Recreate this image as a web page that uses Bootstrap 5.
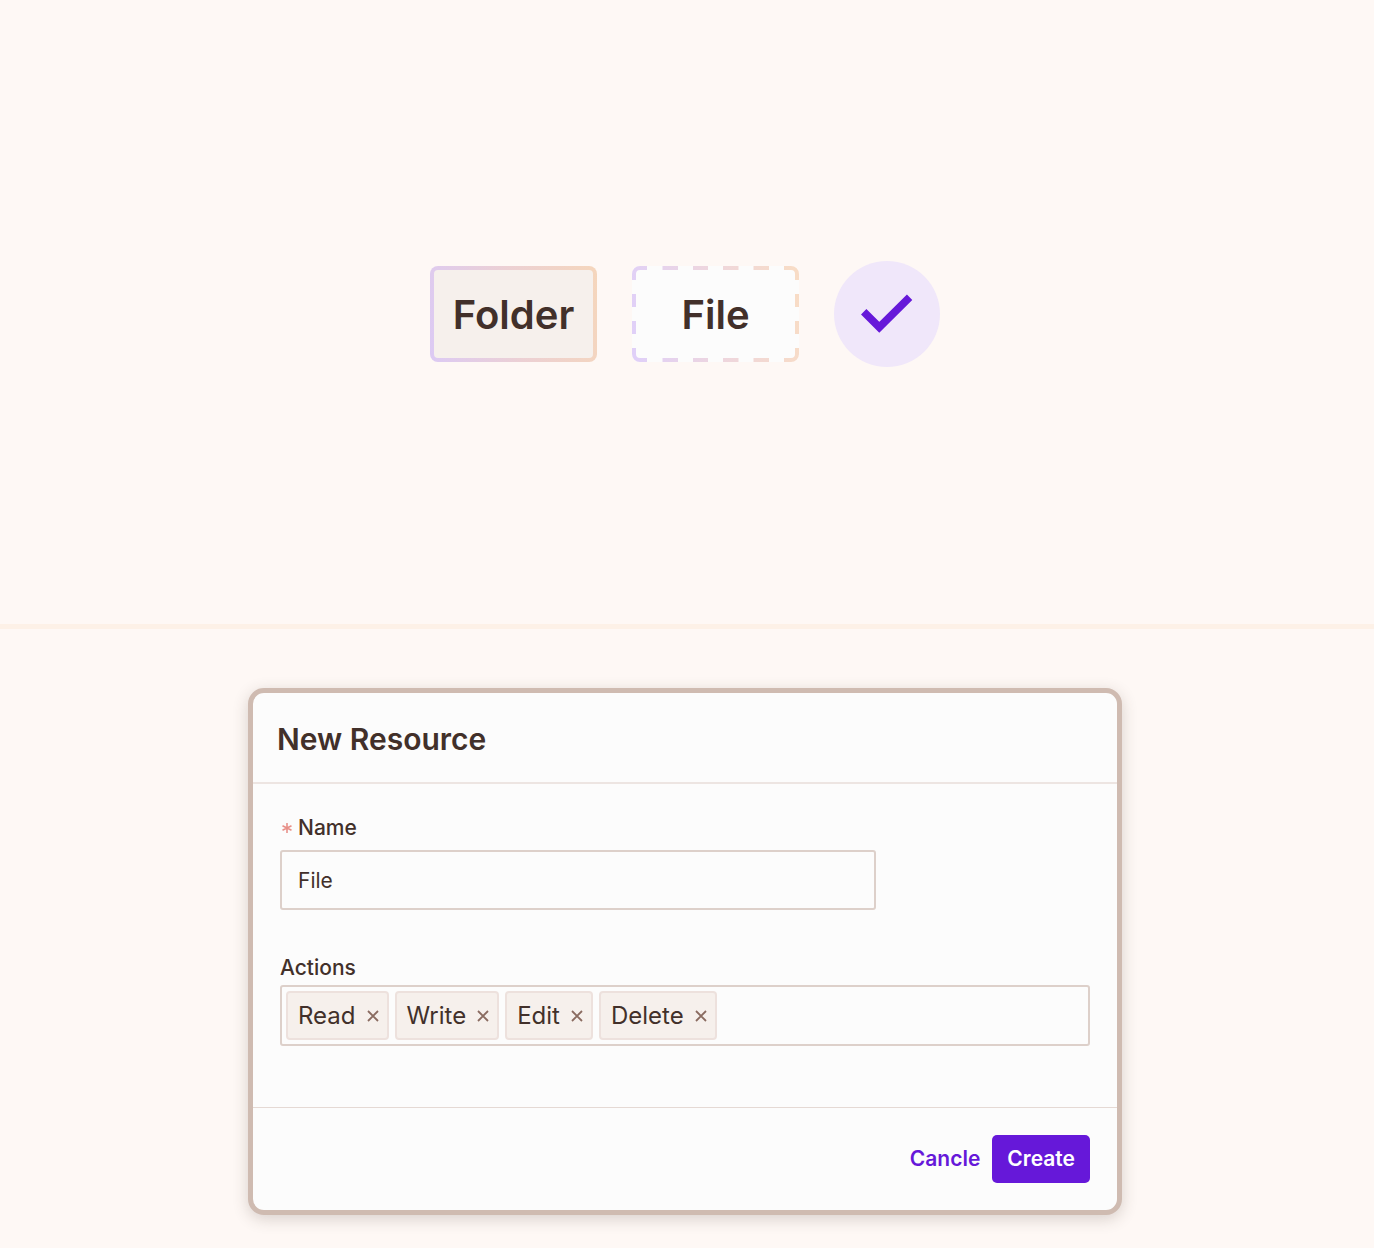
<!DOCTYPE html>
<html lang="en">
<head>
<meta charset="utf-8">
<meta name="viewport" content="width=device-width, initial-scale=1">
<title>New Resource</title>
<link rel="stylesheet" href="https://cdn.jsdelivr.net/npm/bootstrap@5.3.0/dist/css/bootstrap.min.css">
<style>
  :root { --ink: #42302a; --violet: #6618d9; --edge: #ddd0ca; --paper: #fcfcfc; --sand: #f6f0ec; }
  body { background: #fef8f5; color: var(--ink); font-family: Inter, "Liberation Sans", sans-serif; }
  .showcase { padding-top: 261px; padding-bottom: 257px; border-bottom: 5px solid #fdf1e7; }
  .showcase-row { gap: 35px; }
  .tile { width: 167px; height: 96px; padding-top: 2px; border-radius: 8px; font-size: 40px; line-height: 48px; }
  .tile-folder { border: 4px solid transparent; background: linear-gradient(var(--sand), var(--sand)) padding-box, linear-gradient(80deg, #dccaf4, #ecd0d4 50%, #f5d6bc) border-box; }
  .tile-file { background: var(--paper); }
  .check-disc { width: 106px; height: 106px; background: #f0e7fa; }
  .dialog-zone { padding-top: 59px; padding-bottom: 33px; }
  .dialog-card { max-width: 874px; border: 5px solid #cfbbb1; border-radius: 16px; background: var(--paper); box-shadow: 0 4px 16px rgba(66, 48, 42, .2); color: var(--ink); }
  .dialog-head { padding: 28px 24px 24px; border-bottom: 2px solid #ede5e2; }
  .dialog-title { font-size: 30px; line-height: 37px; }
  .dialog-main { padding: 30px 27px 61px; }
  .dialog-foot { padding: 27px; border-top: 1px solid #e5d9d4; gap: 12px; }
  .field-label { font-size: 21px; line-height: 28px; font-weight: 500; }
  .required { width: 10px; height: 10px; margin-left: 2px; margin-right: 6px; }
  .name-input { max-width: 596px; height: 60px; padding: 0 16px; border: 2px solid var(--edge); border-radius: 3px; background: var(--paper); color: var(--ink); font-size: 21px; }
  .name-input:focus { background: var(--paper); color: var(--ink); }
  .name-field { margin-bottom: 44px; }
  .name-label { margin-bottom: 8px; }
  .actions-label { margin-bottom: 3px; }
  .tag-box { height: 61px; padding: 4px; gap: 6px; border: 2px solid var(--edge); border-radius: 3px; }
  .tag-item { height: 49px; padding: 0 8px 0 10px; gap: 11px; background: var(--sand); border: 2px solid #ede1dd; border-radius: 4px; font-size: 24px; line-height: 30px; }
  .tag-close { width: 12px; color: #8a6b60; }
  .dialog-btn { height: 48px; font-size: 21px; line-height: 28px; border-radius: 5px; }
  .btn-create { padding: 0 15px; color: #fff; background: var(--violet); }
  .btn-cancel { color: var(--violet); }
  .btn-create:hover { color: #fff; background: #5512b8; }
</style>
<script src="https://cdn.jsdelivr.net/npm/bootstrap@5.3.0/dist/js/bootstrap.bundle.min.js"></script>
</head>
<body>
<section class="showcase">
  <div class="showcase-row d-flex justify-content-center align-items-center pe-1">
    <div class="tile tile-folder d-flex align-items-center justify-content-center fw-semibold">Folder</div>
    <div class="tile tile-file position-relative d-flex align-items-center justify-content-center fw-semibold">
      <svg class="position-absolute top-0 start-0" width="167" height="96" viewBox="0 0 167 96" fill="none" aria-hidden="true">
        <defs>
          <linearGradient id="dash" gradientUnits="userSpaceOnUse" x1="0" y1="60" x2="167" y2="36">
            <stop offset="0" stop-color="#e0d0f8"/><stop offset=".5" stop-color="#eed6de"/><stop offset="1" stop-color="#f8dcc6"/>
          </linearGradient>
        </defs>
        <path stroke="url(#dash)" stroke-width="4" d="M2 14V8a6 6 0 0 1 6-6h7M30.500 2H46M61 2H76M91 2h15.500M121.500 2H137M152 2h7a6 6 0 0 1 6 6v6M165 28v13M165 55v13M165 82v6a6 6 0 0 1-6 6h-7M137 94h-15.500M106.500 94H91M76 94H61M46 94H30.500M15 94H8a6 6 0 0 1-6-6v-6M2 68V55M2 41V28"/>
      </svg>
      <span>File</span>
    </div>
    <div class="check-disc rounded-circle">
      <svg width="106" height="106" viewBox="0 0 106 106" fill="none" role="img" aria-label="Done">
        <path stroke="#6618d9" stroke-width="7.600" d="M29.700 50.700 45.300 66.300 75.600 36.300"/>
      </svg>
    </div>
  </div>
</section>

<main class="dialog-zone pe-1">
  <form class="dialog-card mx-auto" onsubmit="return false">
    <div class="dialog-head">
      <h1 class="dialog-title fw-semibold mb-0">New Resource</h1>
    </div>
    <div class="dialog-main">
      <div class="name-field">
        <label for="resource-name" class="field-label name-label d-flex align-items-center">
          <svg class="required" viewBox="0 0 10 10" stroke="#e89089" stroke-width="1.600" aria-hidden="true"><path d="M5 0v10M.5 2.700l9 4.600M9.500 2.700l-9 4.600"/></svg>Name</label>
        <input id="resource-name" class="name-input form-control" type="text" value="File" required>
      </div>
      <div id="actions-label" class="field-label actions-label">Actions</div>
      <div class="tag-box d-flex align-items-center" role="group" aria-labelledby="actions-label">
        <span class="tag-item d-flex align-items-center">Read <button type="button" class="tag-close btn p-0 border-0 d-flex" aria-label="Remove Read"><svg width="12" height="12" viewBox="0 0 12 12" stroke="currentColor" stroke-width="1.800"><path d="M1 1l10 10M11 1L1 11"/></svg></button></span>
        <span class="tag-item d-flex align-items-center">Write <button type="button" class="tag-close btn p-0 border-0 d-flex" aria-label="Remove Write"><svg width="12" height="12" viewBox="0 0 12 12" stroke="currentColor" stroke-width="1.800"><path d="M1 1l10 10M11 1L1 11"/></svg></button></span>
        <span class="tag-item d-flex align-items-center">Edit <button type="button" class="tag-close btn p-0 border-0 d-flex" aria-label="Remove Edit"><svg width="12" height="12" viewBox="0 0 12 12" stroke="currentColor" stroke-width="1.800"><path d="M1 1l10 10M11 1L1 11"/></svg></button></span>
        <span class="tag-item d-flex align-items-center">Delete <button type="button" class="tag-close btn p-0 border-0 d-flex" aria-label="Remove Delete"><svg width="12" height="12" viewBox="0 0 12 12" stroke="currentColor" stroke-width="1.800"><path d="M1 1l10 10M11 1L1 11"/></svg></button></span>
      </div>
    </div>
    <div class="dialog-foot d-flex justify-content-end align-items-center">
      <button type="button" class="dialog-btn btn-cancel btn border-0 p-0 fw-semibold">Cancle</button>
      <button type="submit" class="dialog-btn btn-create btn border-0 fw-semibold">Create</button>
    </div>
  </form>
</main>
</body>
</html>
